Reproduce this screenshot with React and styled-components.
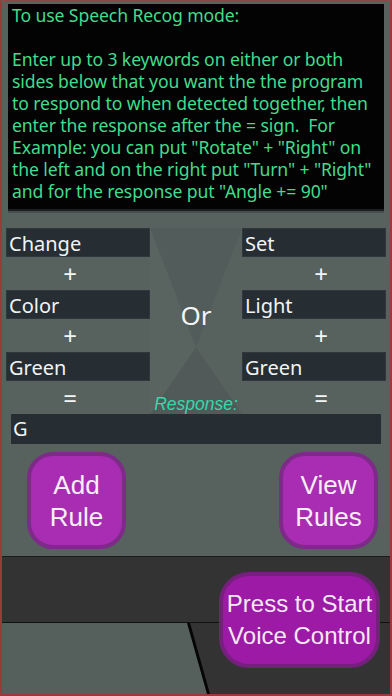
import styled, { createGlobalStyle } from 'styled-components'

const GlobalStyle = createGlobalStyle`
  html, body {
    margin: 0;
    padding: 0;
    background: #57625f;
  }
  * { box-sizing: border-box; }
`

const leftWords = ["Change", "Color", "Green"]
const rightWords = ["Set", "Light", "Green"]
const signs = ["+", "+", "="]

const infoLines = [
  "Enter up to 3 keywords on either or both",
  "sides below that you want the the program",
  "to respond to when detected together, then",
  "enter the response after the = sign.\u00a0 For",
  "Example: you can put \"Rotate\" + \"Right\" on",
  "the left and on the right put \"Turn\" + \"Right\"",
  "and for the response put \"Angle += 90\"",
]

const App = () => {
  return (
    <>
      <GlobalStyle />
      <Frame>
        <InfoBox>
          <Line>To use Speech Recog mode:</Line>
          <Line>&nbsp;</Line>
          {infoLines.map((l, i) => <Line key={i}>{l}</Line>)}
        </InfoBox>

        <RulesGrid>
          <Column>
            {leftWords.map((w, i) => (
              <div key={i}>
                <KeyInput>{w}</KeyInput>
                <Sign $shift={-8}>{signs[i]}</Sign>
              </div>
            ))}
          </Column>
          <Middle>
            <Hourglass viewBox="0 0 92 187" preserveAspectRatio="none">
              <polygon points="0,0 92,0 46,120" fill="#4f5856" opacity="0.6" />
              <polygon points="46,120 92,187 0,187" fill="#4c5553" opacity="0.6" />
              <polygon points="0,0 46,120 0,187" fill="#5d6865" opacity="0.4" />
            </Hourglass>
            <OrText>Or</OrText>
            <ResponseLabel>Response:</ResponseLabel>
          </Middle>
          <Column>
            {rightWords.map((w, i) => (
              <div key={i}>
                <KeyInput>{w}</KeyInput>
                <Sign $shift={7}>{signs[i]}</Sign>
              </div>
            ))}
          </Column>
        </RulesGrid>

        <ResponseInput>G</ResponseInput>

        <ButtonRow>
          <PurpleButton>Add<br />Rule</PurpleButton>
          <PurpleButton>View<br />Rules</PurpleButton>
        </ButtonRow>

        <Bottom>
          <Band />
          <Floor />
          <VoiceButton>Press to Start<br />Voice Control</VoiceButton>
        </Bottom>
      </Frame>
    </>
  )
}

export default App

const Frame = styled.div`
  width: 392px;
  height: 696px;
  border: 2px solid #9a3a3a;
  border-top-color: #8a4848;
  background: #57625f;
  display: flex;
  flex-direction: column;
  overflow: hidden;
`

const InfoBox = styled.div`
  margin: 2px 6px 0 6px;
  height: 207px;
  background: #020302;
  border-bottom: 2px solid #1c1f1f;
  box-shadow: 0 2px 0 #47504e;
  padding: 0 4px 0 4px;
  color: #42dc8c;
  font-family: "Noto Sans", sans-serif;
  font-size: 17.6px;
  line-height: 22px;
`

const Line = styled.div`
  white-space: nowrap;
  letter-spacing: -0.1px;
`

const RulesGrid = styled.div`
  display: grid;
  grid-template-columns: 144px 92px 144px;
  margin: 17px 0 0 4px;
`

const Column = styled.div`
  display: flex;
  flex-direction: column;
`

const KeyInput = styled.div`
  height: 29px;
  background: #262e33;
  color: #f2f4f4;
  font-family: "Noto Sans", sans-serif;
  font-size: 20px;
  line-height: 29px;
  padding-left: 2px;
  border: 1px solid #2f383c;
`

const Sign = styled.div`
  height: 33px;
  color: #f4f6f6;
  font-family: "Noto Sans", sans-serif;
  font-size: 24px;
  line-height: 33px;
  text-align: center;
  transform: translateX(${({ $shift }) => $shift}px);
`

const Middle = styled.div`
  position: relative;
  display: flex;
  flex-direction: column;
  align-items: center;
`

const Hourglass = styled.svg`
  position: absolute;
  inset: 0;
  width: 100%;
  height: 100%;
`

const OrText = styled.div`
  position: relative;
  margin-top: 70px;
  color: #f4f6f6;
  font-family: "Noto Sans", sans-serif;
  font-size: 26px;
  line-height: 34px;
`

const ResponseLabel = styled.div`
  position: relative;
  margin-top: auto;
  margin-bottom: 0;
  color: #34d8aa;
  font-family: "Liberation Sans", Arial, sans-serif;
  font-style: italic;
  font-size: 17.5px;
  line-height: 20px;
`

const ResponseInput = styled.div`
  margin: 0 9px 0 9px;
  height: 30px;
  background: #262e33;
  color: #f2f4f4;
  font-family: "Noto Sans", sans-serif;
  font-size: 20px;
  line-height: 30px;
  padding-left: 2px;
`

const ButtonRow = styled.div`
  display: flex;
  justify-content: space-between;
  padding: 0 12px 0 25px;
  margin-top: 8px;
`

const PurpleButton = styled.div`
  width: 99px;
  height: 97px;
  border-radius: 26px;
  background: #a82db3;
  border: 4px solid #7e2a88;
  color: #f6eef6;
  font-family: "Liberation Sans", Arial, sans-serif;
  font-size: 26px;
  line-height: 32px;
  display: flex;
  align-items: center;
  justify-content: center;
  text-align: center;
`

const Bottom = styled.div`
  position: relative;
  flex: 1;
  display: flex;
  flex-direction: column;
  margin-top: 7px;
`

const Band = styled.div`
  height: 67px;
  background: #333333;
  border-top: 1px solid #1a1a1a;
  border-bottom: 1px solid #111;
`

const Floor = styled.div`
  flex: 1;
  position: relative;
  background: #55605d;

  &::after {
    content: "";
    position: absolute;
    inset: 0;
    background: #333333;
    clip-path: polygon(186px 0, 100% 0, 100% 100%, 206px 100%);
  }
  &::before {
    content: "";
    position: absolute;
    inset: 0;
    background: #050505;
    clip-path: polygon(185px 0, 188px 0, 208px 100%, 205px 100%);
    z-index: 1;
  }
`

const VoiceButton = styled.div`
  position: absolute;
  right: 10px;
  top: 16px;
  width: 161px;
  height: 96px;
  border-radius: 30px;
  background: #9c1aa6;
  border: 4px solid #74207c;
  color: #f4e8f4;
  font-family: "Liberation Sans", Arial, sans-serif;
  font-size: 24px;
  line-height: 32px;
  display: flex;
  align-items: center;
  justify-content: center;
  text-align: center;
  z-index: 2;
`
